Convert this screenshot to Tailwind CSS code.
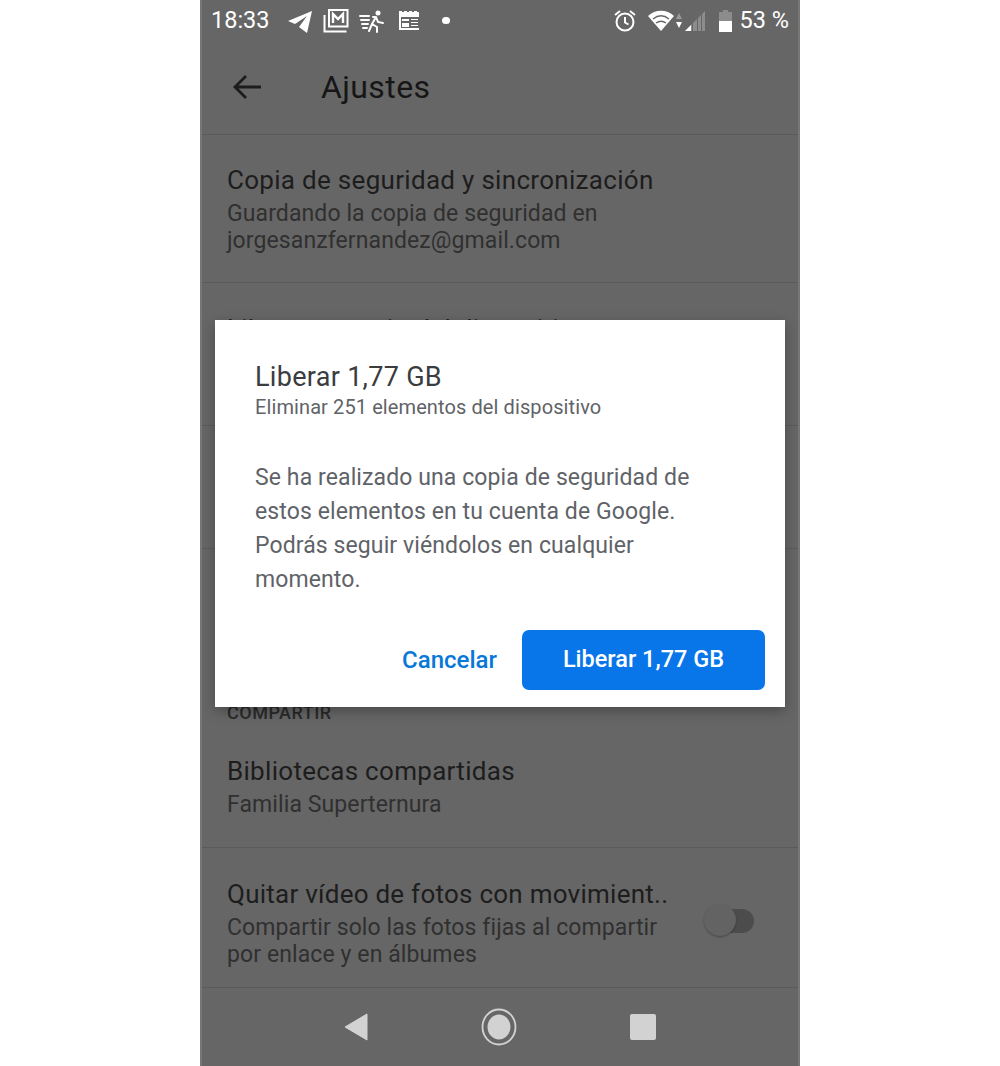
<!DOCTYPE html>
<html lang="es">
  <head>
    <meta charset="UTF-8" />
    <title>Ajustes</title>
    <script src="https://cdn.jsdelivr.net/npm/@tailwindcss/browser@4"></script>
  </head>
  <body class="bg-white flex justify-center font-['Roboto',sans-serif]">
    <div class="relative w-[600px] h-[1066px] overflow-hidden bg-[#666666] flex flex-col border-l-2 border-r-2 border-[#767676]">
      <!-- Status bar -->
      <div class="h-[41px] flex items-center justify-between pl-[9px] pr-[9px] text-white shrink-0">
        <div class="flex items-center">
          <span class="text-[23.500px] w-[76px] leading-none">18:33</span>
          <svg class="w-[26px] h-[24px]" viewBox="0 0 26 24" fill="#fff"><path d="M1 12 25 2 20 24 12 18 20 7 8 15z"/></svg>
          <svg class="w-[26px] h-[24px] ml-[10px]" viewBox="0 0 26 24" fill="none" stroke="#fff"><rect x="6" y="1" width="18.500" height="16.500" stroke-width="2"/><path d="M10 14V5l5 5 5-5v9" stroke-width="2.400"/><path d="M1.500 6v16.500h22" stroke-width="2"/></svg>
          <svg class="w-[26px] h-[24px] ml-[10px]" viewBox="0 0 26 24" fill="none" stroke="#fff" stroke-width="2"><circle cx="19" cy="4" r="2.500" fill="#fff" stroke="none"/><path d="M17 8l-4 7 5 3v5M17 8l2 5 5 1M14 8h3M13 15l-3 7M1 7h9M2 11h8M3 15h6M4 19h4" stroke-linecap="round"/></svg>
          <svg class="w-[24px] h-[22px] ml-[13px]" viewBox="0 0 24 22"><path d="M1 1h3v1h2V1h3v1h2V1h3v1h2V1h3v1h2V1v19H1z" fill="#fff"/><path d="M3 7h18v11H3z" fill="#666"/><path d="M4 9h7v2H4zM13 9h7v1h-7zM13 12h7v1h-7zM13 15h7v1h-7zM4 13h7v4H4z" fill="#fff"/></svg>
          <span class="w-[8px] h-[7px] ml-[20px] rounded-full bg-white"></span>
        </div>
        <div class="flex items-center">
          <svg class="w-[24px] h-[24px]" viewBox="0 0 24 24" fill="none" stroke="#fff" stroke-width="2"><circle cx="12" cy="13" r="8.500"/><path d="M12 8v5.500l3.500 2M2 6l5-4M22 6l-5-4"/></svg>
          <svg class="w-[26px] h-[22px] ml-[11px]" viewBox="0 0 26 22" fill="#fff"><path d="M0 6C7-1 19-1 26 6L13 21z"/><path d="M5 9c5-4 11-4 16 0" fill="none" stroke="#666" stroke-width="1.500"/><path d="M8 13c3-2 7-2 10 0" fill="none" stroke="#666" stroke-width="1.500"/></svg>
          <svg class="w-[8px] h-[16px] ml-[1px]" viewBox="0 0 8 16"><path d="M4 0l3 6H1z" fill="#999"/><path d="M4 15l3-6H1z" fill="#fff"/></svg>
          <svg class="w-[20px] h-[20px] ml-[2px]" viewBox="0 0 20 20"><path d="M7 13v7H0zM12 8v12H8V12zM16 4v16h-3V7zM20 0v20h-3V3z" fill="#8c8c8c"/><path d="M6 14v6H0z" fill="#fff"/></svg>
          <svg class="w-[13px] h-[22px] ml-[14px]" viewBox="0 0 13 22"><path d="M4 0h5v2h4v9H0V2h4z" fill="#8c8c8c"/><path d="M0 11h13v11H0z" fill="#fff"/></svg>
          <span class="text-[23.500px] leading-none ml-[8px]">53 %</span>
        </div>
      </div>

      <!-- Toolbar -->
      <div class="h-[94px] shrink-0 flex items-center pl-[30px] pb-[1px] border-b border-[#5a5a5a]">
        <svg class="w-[30px] h-[30px]" viewBox="0 0 30 30" fill="none" stroke="#1c1c1c" stroke-width="2.800"><path d="M29 15H3M14 4 3 15l11 11"/></svg>
        <span class="ml-[59px] text-[32px] leading-none text-[#161616] tracking-[0.4px]">Ajustes</span>
      </div>

      <!-- Settings rows -->
      <div class="h-[148px] shrink-0 border-b border-[#5a5a5a] pl-[25px] pt-[30px]">
        <p class="text-[26px] leading-[30px] text-[#1d1d1d] tracking-[0.3px]">Copia de seguridad y sincronización</p>
        <p class="mt-[5px] text-[23px] leading-[27px] text-[#303030] tracking-[0.1px]">Guardando la copia de seguridad en<br />jorgesanzfernandez@gmail.com</p>
      </div>
      <div class="h-[143px] shrink-0 border-b border-[#5a5a5a] pl-[25px] pt-[31px]">
        <p class="text-[26px] leading-[30px] text-[#1d1d1d] tracking-[0.3px]">Liberar espacio del dispositivo</p>
      </div>
      <div class="h-[123px] shrink-0 border-b border-[#5a5a5a]"></div>
      <div class="h-[174px] shrink-0 flex flex-col justify-end pl-[25px]">
        <p class="text-[18px] leading-[20px] text-[#2a2a2a] font-medium tracking-[0.5px]">COMPARTIR</p>
      </div>
      <div class="h-[125px] shrink-0 border-b border-[#5a5a5a] pl-[25px] pt-[33px]">
        <p class="text-[26px] leading-[30px] text-[#1d1d1d] tracking-[0.3px]">Bibliotecas compartidas</p>
        <p class="mt-[5px] text-[23px] leading-[27px] text-[#303030] tracking-[0.1px]">Familia Superternura</p>
      </div>
      <div class="h-[140px] shrink-0 border-b border-[#5a5a5a] pl-[25px] pr-[44px] pt-[31px] flex justify-between">
        <div>
          <p class="text-[26px] leading-[30px] text-[#1d1d1d] tracking-[0.25px]">Quitar vídeo de fotos con movimient..</p>
          <p class="mt-[5px] text-[23px] leading-[27px] text-[#303030] tracking-[0.1px]">Compartir solo las fotos fijas al compartir<br />por enlace y en álbumes</p>
        </div>
        <div class="relative w-[50px] h-[24px] mt-[30px] ml-[-40px] shrink-0">
          <div class="absolute left-[8px] right-0 top-0 bottom-0 rounded-full bg-[#4c4c4c]"></div>
          <div class="absolute left-0 top-[-5px] w-[32px] h-[32px] rounded-full bg-[#636363] shadow-[0_1px_2px_rgba(0,0,0,0.3)]"></div>
        </div>
      </div>

      <!-- Nav bar -->
      <div class="flex-1 flex items-center justify-center gap-[113px]">
        <svg class="w-[24px] h-[28px]" viewBox="0 0 24 28" fill="#d2d2d2"><path d="M23 1v26L1 14z" stroke="#d2d2d2" stroke-linejoin="round"/></svg>
        <svg class="w-[36px] h-[38px]" viewBox="0 0 36 38"><ellipse cx="18" cy="19" rx="16.500" ry="17.500" fill="none" stroke="#d2d2d2" stroke-width="1.800"/><ellipse cx="18" cy="19" rx="11.500" ry="12.500" fill="#d2d2d2"/></svg>
        <div class="w-[26px] h-[26px] rounded-[2px] bg-[#d2d2d2]"></div>
      </div>

      <!-- Dialog -->
      <div class="absolute left-[13px] top-[320px] w-[570px] h-[387px] bg-white shadow-[0_4px_12px_rgba(0,0,0,0.3)] pl-[40px] pr-[20px] pt-[42px] flex flex-col">
        <p class="text-[27px] leading-[30px] text-[#3a3c40] tracking-[0.3px]">Liberar 1,77 GB</p>
        <p class="mt-[3px] text-[20px] leading-[24px] text-[#5f6368] tracking-[0.1px]">Eliminar 251 elementos del dispositivo</p>
        <p class="mt-[42px] text-[23px] leading-[34px] text-[#5f6368] tracking-[0.1px]">Se ha realizado una copia de seguridad de<br />estos elementos en tu cuenta de Google.<br />Podrás seguir viéndolos en cualquier<br />momento.</p>
        <div class="mt-[33px] flex items-center justify-end">
          <span class="text-[24px] font-medium text-[#0878d8]">Cancelar</span>
          <button class="ml-[25px] w-[243px] h-[60px] rounded-[7px] bg-[#0875e9] text-white text-[23.500px] font-medium">Liberar 1,77 GB</button>
        </div>
      </div>
    </div>
  </body>
</html>
